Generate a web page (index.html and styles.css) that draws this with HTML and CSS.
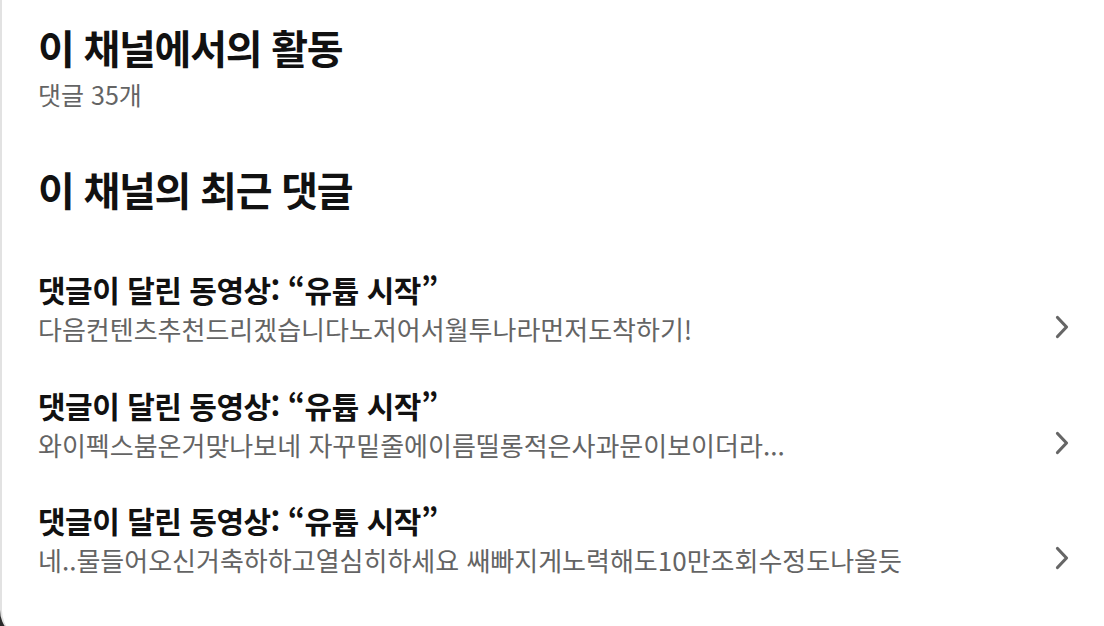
FILE: index.html
```html
<!DOCTYPE html>
<html lang="ko">
<head>
<meta charset="utf-8">
<link rel="stylesheet" href="styles.css">
</head>
<body>
<div class="card">
  <section class="activity">
    <h1 class="heading">이 채널에서의 활동</h1>
    <p class="count">댓글 35개</p>
  </section>
  <section class="recent">
    <h2 class="heading">이 채널의 최근 댓글</h2>
    <ul class="list">
      <li class="item">
        <div class="item-text">
          <div class="item-title">댓글이 달린 동영상: “유튭 시작”</div>
          <div class="item-sub">다음컨텐츠추천드리겠습니다노저어서월투나라먼저도착하기!</div>
        </div>
        <svg class="chev" width="16" height="24" viewBox="0 0 16 24"><polyline points="3.5,2.5 12.5,12 3.5,21.5" fill="none" stroke="#666" stroke-width="3.2" stroke-linecap="round" stroke-linejoin="round"/></svg>
      </li>
      <li class="item">
        <div class="item-text">
          <div class="item-title">댓글이 달린 동영상: “유튭 시작”</div>
          <div class="item-sub">와이펙스붐온거맞나보네 자꾸밑줄에이름띨롱적은사과문이보이더라...</div>
        </div>
        <svg class="chev" width="16" height="24" viewBox="0 0 16 24"><polyline points="3.5,2.5 12.5,12 3.5,21.5" fill="none" stroke="#666" stroke-width="3.2" stroke-linecap="round" stroke-linejoin="round"/></svg>
      </li>
      <li class="item">
        <div class="item-text">
          <div class="item-title">댓글이 달린 동영상: “유튭 시작”</div>
          <div class="item-sub">네..물들어오신거축하하고열심히하세요 쌔빠지게노력해도10만조회수정도나올듯</div>
        </div>
        <svg class="chev" width="16" height="24" viewBox="0 0 16 24"><polyline points="3.5,2.5 12.5,12 3.5,21.5" fill="none" stroke="#666" stroke-width="3.2" stroke-linecap="round" stroke-linejoin="round"/></svg>
      </li>
    </ul>
  </section>
</div>
</body>
</html>
```

FILE: styles.css
```css
html, body {
  margin: 0;
  padding: 0;
  background: #2a2a2a;
}
body {
  height: 626px;
  overflow: hidden;
  font-family: "Noto Sans CJK KR", "Noto Sans", sans-serif;
  color: #111;
}
.card {
  background: #fff;
  width: 1104px;
  height: 640px;
  box-sizing: border-box;
  border-left: 2px solid #e2e2e2;
  border-bottom-left-radius: 30px;
  padding: 23px 34px 0 36px;
  overflow: hidden;
}
.heading {
  margin: 0;
  font-size: 40px;
  line-height: 48px;
  font-weight: 700;
  letter-spacing: -1.25px;
}
.count {
  margin: 7px 0 0;
  font-size: 25px;
  line-height: 32px;
  color: #646464;
  letter-spacing: 0;
}
.recent {
  margin-top: 55px;
}
.list {
  list-style: none;
  margin: 56px 0 0;
  padding: 0;
  display: flex;
  flex-direction: column;
  gap: 35.5px;
}
.item {
  display: flex;
  align-items: center;
  justify-content: space-between;
}
.item-title {
  font-size: 30px;
  line-height: 40px;
  font-weight: 700;
  letter-spacing: -0.5px;
}
.item-sub {
  font-size: 26px;
  line-height: 40px;
  color: #646464;
  letter-spacing: 0;
}
.chev {
  margin-top: 36px;
  flex: none;
}
```
